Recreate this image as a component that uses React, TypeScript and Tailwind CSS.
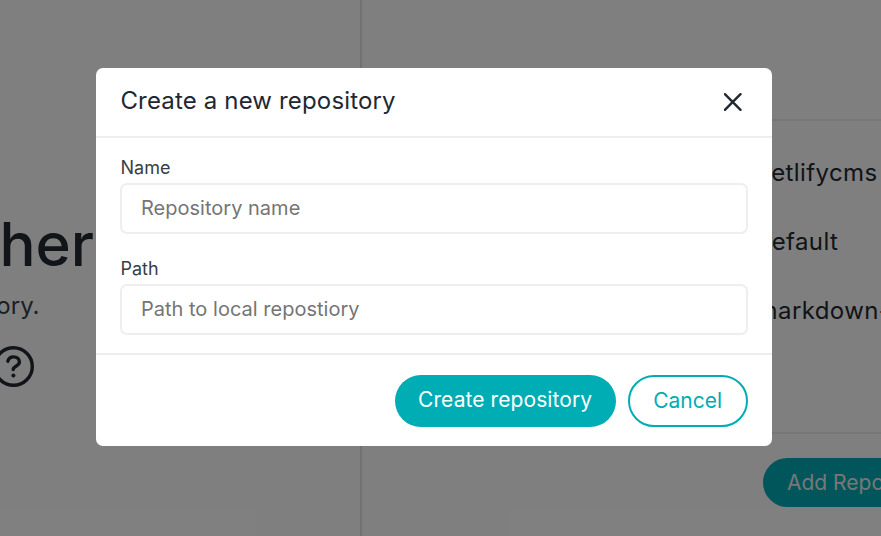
const repositories = ["netlifycms", "default", "markdown-wiki"];

function Field({ label, placeholder }: { label: string; placeholder: string }) {
  return (
    <label className="flex flex-col">
      <span className="h-[27px] text-[18px] leading-[27px] tracking-[0.05px] text-[#393e46]">{label}</span>
      <input
        className="mt-[2px] h-[51px] w-full rounded-[7px] border-2 border-[#eeeeee] bg-white px-[18.5px] pb-[2px] text-[20px] tracking-[0.02px] text-[#222831] outline-none placeholder:text-[#757575]"
        placeholder={placeholder}
      />
    </label>
  );
}

function HelpIcon() {
  return (
    <svg
      className="mt-[24px] mr-[58px] size-[44px] shrink-0"
      viewBox="0 0 44 44"
      fill="none"
      stroke="currentColor"
      strokeWidth="3.4"
      strokeLinecap="round"
      strokeLinejoin="round"
    >
      <circle cx="21.5" cy="21.5" r="18.8" />
      <path d="M15.8 16.2c.9-2.9 3.1-4.3 5.8-4.3 3.4 0 5.8 2.2 5.8 5.2 0 4-6.2 4.2-6.2 7.4" />
      <circle cx="21.4" cy="30.6" r="2" fill="currentColor" stroke="none" />
    </svg>
  );
}

function Background() {
  return (
    <div className="flex h-full bg-white text-[#222831]">
      <section className="w-[362px] shrink-0 overflow-hidden border-r-2 border-[#e2e2e2] pt-[206px]">
        <div className="flex w-[94px] flex-col items-end whitespace-nowrap">
          <h1 className="h-[76px] text-[60px] leading-[76px] font-medium">GitGather</h1>
          <p className="mt-[9px] mr-[54.5px] h-[30px] text-[24px] leading-[30px] text-[#393e46]">Open a repository.</p>
          <HelpIcon />
        </div>
      </section>
      <section className="flex min-w-0 flex-1 flex-col overflow-hidden pt-[119px] whitespace-nowrap">
        <ul className="h-[315px] shrink-0 border-y-2 border-[#eeeeee] pt-[17px] pl-[394.6px]">
          {repositories.map((name) => (
            <li key={name} className="h-[69px] text-[24px] leading-[69px] tracking-[0.4px]">{name}</li>
          ))}
        </ul>
        <button className="mt-[24px] ml-[401px] h-[49px] w-[220px] shrink-0 rounded-full bg-[#00adb5] pl-[24px] text-left text-[21px] text-[#eeeeee]">
          Add Repository
        </button>
      </section>
    </div>
  );
}

export default function App() {
  return (
    <main className="relative h-[536px] w-[881px] overflow-hidden font-['Inter',sans-serif]">
      <Background />
      <div className="absolute inset-0 flex items-start bg-black/50 pt-[68px] pl-[96.4px]">
        <div role="dialog" className="h-[378px] w-[675.2px] rounded-[7px] bg-white">
          <header className="flex h-[70px] items-center justify-between border-b-2 border-[#eeeeee] pr-[30px] pl-[24px]">
            <h2 className="pb-[3px] text-[24px] tracking-[0.16px] text-[#222831]">Create a new repository</h2>
            <button aria-label="Close" className="text-[#222831]">
              <svg className="size-[18px]" viewBox="0 0 18 18" fill="none" stroke="currentColor" strokeWidth="2.4" strokeLinecap="round">
                <path d="M.9 1.2 16.5 16.8M16.5 1.2.9 16.8" />
              </svg>
            </button>
          </header>
          <div className="flex h-[215px] flex-col gap-[21px] px-[24px] pt-[16px]">
            <Field label="Name" placeholder="Repository name" />
            <Field label="Path" placeholder="Path to local repostiory" />
          </div>
          <footer className="flex h-[93px] justify-end gap-[12px] border-t-2 border-[#eeeeee] pt-[20px] pr-[24px]">
            <button className="h-[52px] w-[221px] rounded-full bg-[#00adb5] pb-[3px] text-[21px] tracking-[0.08px] text-white">
              Create repository
            </button>
            <button className="h-[52px] w-[120px] rounded-full border-2 border-[#00adb5] text-[21px] tracking-[0px] text-[#00adb5]">
              Cancel
            </button>
          </footer>
        </div>
      </div>
    </main>
  );
}
